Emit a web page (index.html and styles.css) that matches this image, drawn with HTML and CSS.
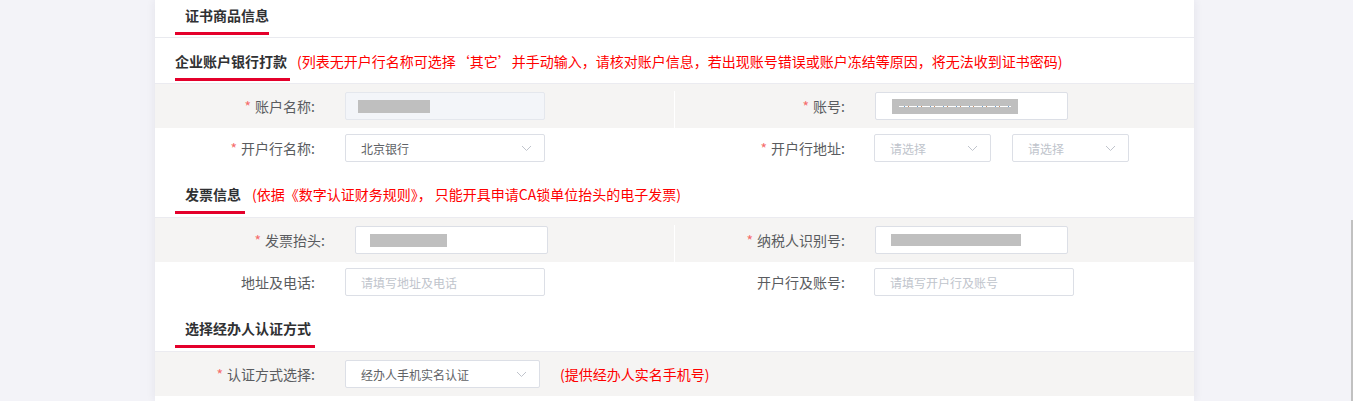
FILE: index.html
```html
<!DOCTYPE html>
<html lang="zh-CN">
<head>
<meta charset="utf-8">
<title>证书商品信息</title>
<link rel="stylesheet" href="styles.css">
</head>
<body>
<div class="card">
  <div class="tabbar"><span class="tab">证书商品信息</span></div>

  <div class="sec sec-first">
    <span class="sec-title first">企业账户银行打款</span>
    <span class="note">(列表无开户行名称可选择‘其它’并手动输入，请核对账户信息，若出现账号错误或账户冻结等原因，将无法收到证书密码)</span>
  </div>

  <div class="row gray">
    <div class="cell">
      <label class="lbl l160"><i>*</i>账户名称:</label>
      <div class="input disabled w200"><span class="mask m-name"></span></div>
    </div>
    <div class="cell">
      <label class="lbl l171"><i>*</i>账号:</label>
      <div class="input w193"><span class="mask m-acct"><span class="dots"></span></span></div>
    </div>
  </div>

  <div class="row">
    <div class="cell">
      <label class="lbl l160"><i>*</i>开户行名称:</label>
      <div class="input select w200"><span class="val">北京银行</span><svg class="arrow" width="11" height="7" viewBox="0 0 11 7"><polyline points="1,1 5.5,5.5 10,1" fill="none" stroke="#c0c4cc" stroke-width="1"/></svg></div>
    </div>
    <div class="cell">
      <label class="lbl l171 mr29"><i>*</i>开户行地址:</label>
      <div class="input select w117"><span class="ph">请选择</span><svg class="arrow" width="11" height="7" viewBox="0 0 11 7"><polyline points="1,1 5.5,5.5 10,1" fill="none" stroke="#c0c4cc" stroke-width="1"/></svg></div>
      <div class="input select w117 ml21"><span class="ph">请选择</span><svg class="arrow" width="11" height="7" viewBox="0 0 11 7"><polyline points="1,1 5.5,5.5 10,1" fill="none" stroke="#c0c4cc" stroke-width="1"/></svg></div>
    </div>
  </div>

  <div class="sec">
    <span class="sec-title">发票信息</span>
    <span class="note">(依据《数字认证财务规则》，&nbsp;只能开具申请CA锁单位抬头的电子发票)</span>
  </div>

  <div class="row gray">
    <div class="cell">
      <label class="lbl l170"><i>*</i>发票抬头:</label>
      <div class="input w193"><span class="mask m-title"></span></div>
    </div>
    <div class="cell">
      <label class="lbl l171"><i>*</i>纳税人识别号:</label>
      <div class="input w193"><span class="mask m-tax"></span></div>
    </div>
  </div>

  <div class="row">
    <div class="cell">
      <label class="lbl l160">地址及电话:</label>
      <div class="input w200"><span class="ph">请填写地址及电话</span></div>
    </div>
    <div class="cell">
      <label class="lbl l171 mr29">开户行及账号:</label>
      <div class="input w200"><span class="ph">请填写开户行及账号</span></div>
    </div>
  </div>

  <div class="sec">
    <span class="sec-title">选择经办人认证方式</span>
  </div>

  <div class="row gray plain">
    <div class="cell wide">
      <label class="lbl l160"><i>*</i>认证方式选择:</label>
      <div class="input select w195"><span class="val">经办人手机实名认证</span><svg class="arrow" width="11" height="7" viewBox="0 0 11 7"><polyline points="1,1 5.5,5.5 10,1" fill="none" stroke="#c0c4cc" stroke-width="1"/></svg></div>
      <span class="note ml20">(提供经办人实名手机号)</span>
    </div>
  </div>
</div>
<div class="thumb"></div>
</body>
</html>
```

FILE: styles.css
```css
* { box-sizing: border-box; }
html, body { margin: 0; padding: 0; }
body {
  background: #f3f3f8;
  font-family: "Noto Sans CJK SC", "Noto Sans", "Liberation Sans", sans-serif;
  font-size: 14px;
  color: #5a5c60;
  overflow: hidden;
  height: 401px;
}
.card {
  margin-left: 155px;
  width: 1039px;
  height: 401px;
  background: #fff;
  box-shadow: 0 0 9px rgba(40, 40, 80, 0.08);
}
.tabbar {
  height: 38px;
  padding: 5px 0 0 20px;
  border-bottom: 1px solid #e9eaef;
}
.tab {
  display: inline-block;
  padding: 0 0 7px 10px;
  line-height: 20px;
  font-weight: 700;
  color: #303133;
  border-bottom: 3px solid #e4002b;
}
.sec {
  height: 49px;
  padding: 16px 0 0 20px;
  display: flex;
  align-items: flex-start;
}
.sec-first { height: 45px; padding-top: 13px; }
.sec-title {
  display: inline-block;
  padding: 0 4px 7px 10px;
  line-height: 20px;
  font-weight: 700;
  color: #303133;
  border-bottom: 3px solid #e4002b;
}
.sec-title.first { padding-left: 0; padding-right: 3px; }
.note {
  color: #ff0000;
  line-height: 20px;
  margin-left: 7px;
}
.ml20 { margin-left: 20px; }
.row {
  height: 40px;
  display: flex;
}
.row.gray {
  height: 45px;
  border-top: 1px solid #ebebf0;
  background: linear-gradient(#fff, #fff) no-repeat 519px 7px / 1px calc(100% - 7px), #f5f4f3;
}
.row.gray.plain { background: #f5f4f3; }
.cell {
  width: 519px;
  display: flex;
  align-items: center;
}
.cell + .cell { width: 520px; }
.cell.wide { width: 100%; }
.lbl {
  text-align: right;
  margin-right: 30px;
  line-height: 20px;
  color: #5a5c60;
  flex: none;
}
.lbl i {
  font-style: normal;
  color: #f56c6c;
  margin-right: 4px;
}
.l160 { width: 160px; }
.l170 { width: 170px; }
.l171 { width: 171px; }
.mr29 { margin-right: 29px; }
.input {
  height: 28px;
  border: 1px solid #dcdfe6;
  border-radius: 2px;
  background: #fff;
  display: flex;
  align-items: center;
  padding-left: 15px;
  font-size: 12px;
  flex: none;
}
.input.disabled { background: #f3f5f9; border-color: #e4e7ed; }
.w117 { width: 117px; }
.w193 { width: 193px; }
.w195 { width: 195px; }
.w200 { width: 200px; }
.ml21 { margin-left: 21px; }
.val { color: #606266; }
.ph { color: #c0c4cc; }
.arrow { margin-left: auto; margin-right: 12px; }
.mask {
  display: flex;
  align-items: center;
  background: #bfbfbf;
  height: 13px;
}
.m-name { width: 72px; margin-left: -3px; }
.m-acct { width: 126px; height: 15px; margin-left: 1px; padding: 0 7px; }
.m-title { width: 77px; margin-left: -1px; }
.m-tax { width: 130px; height: 12px; margin-left: 0; }
.dots {
  display: block;
  width: 100%;
  height: 1px;
  background: repeating-linear-gradient(90deg, #ffffff 0 5px, #6e9fcf 5px 6px, #ffffff 6px 9px, #c98f6a 9px 10px, #ffffff 10px 13px);
}
.thumb {
  position: fixed;
  right: 0;
  top: 220px;
  bottom: 0;
  width: 2px;
  background: #c1c1c1;
}
```
